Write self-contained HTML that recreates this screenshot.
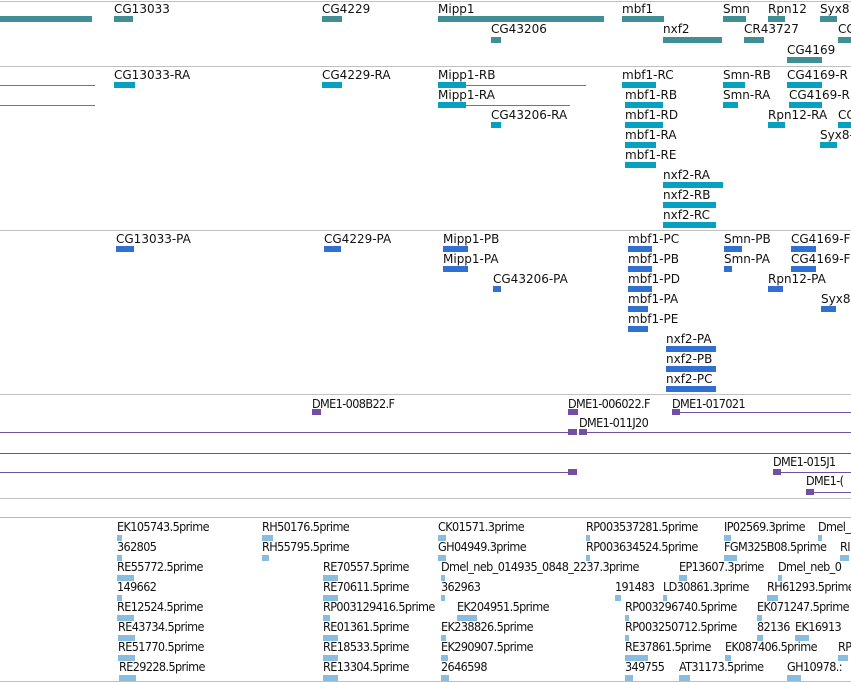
<!DOCTYPE html>
<html><head><meta charset="utf-8"><style>
body{margin:0;width:851px;height:682px;background:#fff;position:relative;overflow:hidden;font-family:"DejaVu Sans","Liberation Sans",sans-serif;}
.t{position:absolute;font-size:12px;line-height:13px;color:#111;white-space:nowrap}
.c{position:absolute;font-size:12.5px;line-height:13px;color:#111;white-space:nowrap;font-stretch:condensed;letter-spacing:-0.6px}
.h{position:absolute;left:0;width:851px;height:1px;background:#c0c0c0}
.b{position:absolute;height:6px}
.g{background:#3f8f94}.r{background:#08a0c0}.p{background:#3070d0}.u{background:#7050a0}.e{background:#88bde0}
.l{position:absolute;height:1px}
</style></head><body>
<div class="h" style="top:1px"></div>
<div class="h" style="top:66px"></div>
<div class="h" style="top:230px"></div>
<div class="h" style="top:394px"></div>
<div class="h" style="top:498px"></div>
<div class="h" style="top:517px;background:#9cc0dc"></div>
<div class="h" style="top:681px"></div>

<!-- genes -->
<div class="b g" style="left:0;top:16px;width:92px"></div>
<div class="t" style="left:114px;top:3px">CG13033</div><div class="b g" style="left:114px;top:16px;width:19px"></div>
<div class="t" style="left:322px;top:3px">CG4229</div><div class="b g" style="left:322px;top:16px;width:20px"></div>
<div class="t" style="left:438px;top:3px">Mipp1</div><div class="b g" style="left:438px;top:16px;width:166px"></div>
<div class="t" style="left:622px;top:3px">mbf1</div><div class="b g" style="left:622px;top:16px;width:42px"></div>
<div class="t" style="left:723px;top:3px">Smn</div><div class="b g" style="left:723px;top:16px;width:23px"></div>
<div class="t" style="left:768px;top:3px">Rpn12</div><div class="b g" style="left:768px;top:16px;width:17px"></div>
<div class="t" style="left:820px;top:3px">Syx8</div><div class="b g" style="left:820px;top:16px;width:17px"></div>
<div class="t" style="left:491px;top:23px">CG43206</div><div class="b g" style="left:491px;top:37px;width:10px"></div>
<div class="t" style="left:663px;top:23px">nxf2</div><div class="b g" style="left:663px;top:37px;width:59px"></div>
<div class="t" style="left:744px;top:23px">CR43727</div><div class="b g" style="left:744px;top:37px;width:20px"></div>
<div class="t" style="left:838px;top:23px">CG</div><div class="b g" style="left:838px;top:37px;width:13px"></div>
<div class="t" style="left:787px;top:44px">CG4169</div><div class="b g" style="left:787px;top:57px;width:35px"></div>

<!-- transcripts -->
<div class="l r" style="left:0;top:85px;width:95px"></div><div class="l r" style="left:0;top:105px;width:95px"></div>
<div class="t" style="left:114px;top:69px">CG13033-RA</div><div class="b r" style="left:114px;top:82px;width:21px"></div>
<div class="t" style="left:322px;top:69px">CG4229-RA</div><div class="b r" style="left:322px;top:82px;width:20px"></div>
<div class="t" style="left:438px;top:69px">Mipp1-RB</div><div class="b r" style="left:438px;top:82px;width:28px"></div><div class="l r" style="left:438px;top:85px;width:148px"></div>
<div class="t" style="left:438px;top:89px">Mipp1-RA</div><div class="b r" style="left:438px;top:102px;width:28px"></div><div class="l r" style="left:438px;top:105px;width:132px"></div>
<div class="t" style="left:491px;top:109px">CG43206-RA</div><div class="b r" style="left:491px;top:122px;width:10px"></div>
<div class="t" style="left:622px;top:69px">mbf1-RC</div><div class="b r" style="left:622px;top:82px;width:34px"></div>
<div class="t" style="left:625px;top:89px">mbf1-RB</div><div class="b r" style="left:625px;top:102px;width:38px"></div>
<div class="t" style="left:625px;top:109px">mbf1-RD</div><div class="b r" style="left:625px;top:122px;width:38px"></div>
<div class="t" style="left:625px;top:129px">mbf1-RA</div><div class="b r" style="left:625px;top:142px;width:31px"></div>
<div class="t" style="left:625px;top:149px">mbf1-RE</div><div class="b r" style="left:625px;top:162px;width:31px"></div>
<div class="t" style="left:663px;top:169px">nxf2-RA</div><div class="b r" style="left:663px;top:182px;width:60px"></div>
<div class="t" style="left:663px;top:189px">nxf2-RB</div><div class="b r" style="left:663px;top:202px;width:53px"></div>
<div class="t" style="left:663px;top:209px">nxf2-RC</div><div class="b r" style="left:663px;top:222px;width:53px"></div>
<div class="t" style="left:723px;top:69px">Smn-RB</div><div class="b r" style="left:723px;top:82px;width:22px"></div>
<div class="t" style="left:723px;top:89px">Smn-RA</div><div class="b r" style="left:723px;top:102px;width:15px"></div>
<div class="t" style="left:787px;top:69px">CG4169-R</div><div class="b r" style="left:787px;top:82px;width:35px"></div>
<div class="t" style="left:789px;top:89px">CG4169-R</div><div class="b r" style="left:789px;top:102px;width:33px"></div>
<div class="t" style="left:768px;top:109px">Rpn12-RA</div><div class="b r" style="left:768px;top:122px;width:17px"></div>
<div class="t" style="left:838px;top:109px">CC</div><div class="b r" style="left:838px;top:122px;width:13px"></div>
<div class="t" style="left:820px;top:129px">Syx8-</div><div class="b r" style="left:820px;top:142px;width:17px"></div>

<!-- proteins -->
<div class="t" style="left:116px;top:233px">CG13033-PA</div><div class="b p" style="left:116px;top:246px;width:18px"></div>
<div class="t" style="left:324px;top:233px">CG4229-PA</div><div class="b p" style="left:324px;top:246px;width:17px"></div>
<div class="t" style="left:443px;top:233px">Mipp1-PB</div><div class="b p" style="left:443px;top:246px;width:25px"></div>
<div class="t" style="left:443px;top:253px">Mipp1-PA</div><div class="b p" style="left:443px;top:266px;width:25px"></div>
<div class="t" style="left:493px;top:273px">CG43206-PA</div><div class="b p" style="left:493px;top:286px;width:8px"></div>
<div class="t" style="left:628px;top:233px">mbf1-PC</div><div class="b p" style="left:628px;top:246px;width:24px"></div>
<div class="t" style="left:628px;top:253px">mbf1-PB</div><div class="b p" style="left:628px;top:266px;width:24px"></div>
<div class="t" style="left:628px;top:273px">mbf1-PD</div><div class="b p" style="left:628px;top:286px;width:24px"></div>
<div class="t" style="left:628px;top:293px">mbf1-PA</div><div class="b p" style="left:628px;top:306px;width:20px"></div>
<div class="t" style="left:628px;top:313px">mbf1-PE</div><div class="b p" style="left:628px;top:326px;width:20px"></div>
<div class="t" style="left:666px;top:333px">nxf2-PA</div><div class="b p" style="left:666px;top:346px;width:50px"></div>
<div class="t" style="left:666px;top:353px">nxf2-PB</div><div class="b p" style="left:666px;top:366px;width:50px"></div>
<div class="t" style="left:666px;top:373px">nxf2-PC</div><div class="b p" style="left:666px;top:386px;width:50px"></div>
<div class="t" style="left:724px;top:233px">Smn-PB</div><div class="b p" style="left:724px;top:246px;width:18px"></div>
<div class="t" style="left:724px;top:253px">Smn-PA</div><div class="b p" style="left:724px;top:266px;width:8px"></div>
<div class="t" style="left:791px;top:233px">CG4169-F</div><div class="b p" style="left:791px;top:246px;width:25px"></div>
<div class="t" style="left:791px;top:253px">CG4169-F</div><div class="b p" style="left:791px;top:266px;width:25px"></div>
<div class="t" style="left:768px;top:273px">Rpn12-PA</div><div class="b p" style="left:768px;top:286px;width:15px"></div>
<div class="t" style="left:821px;top:293px">Syx8-</div><div class="b p" style="left:821px;top:306px;width:15px"></div>

<!-- clones -->
<div class="c" style="left:312px;top:397px">DME1-008B22.F</div><div class="b u" style="left:312px;top:409px;width:9px"></div>
<div class="c" style="left:568px;top:397px">DME1-006022.F</div><div class="b u" style="left:568px;top:409px;width:10px"></div>
<div class="c" style="left:672px;top:397px">DME1-017021</div><div class="b u" style="left:672px;top:409px;width:8px"></div><div class="l u" style="left:672px;top:412px;width:179px"></div>
<div class="c" style="left:579px;top:416px">DME1-011J20</div>
<div class="l u" style="left:0;top:432px;width:575px"></div><div class="b u" style="left:568px;top:429px;width:9px"></div><div class="b u" style="left:579px;top:429px;width:8px"></div><div class="l u" style="left:580px;top:432px;width:271px"></div>
<div class="l u" style="left:0;top:453px;width:851px"></div>
<div class="l u" style="left:0;top:472px;width:575px"></div><div class="b u" style="left:568px;top:469px;width:9px"></div>
<div class="c" style="left:773px;top:455px">DME1-015J1</div><div class="b u" style="left:773px;top:469px;width:8px"></div><div class="l u" style="left:773px;top:472px;width:78px"></div>
<div class="c" style="left:806px;top:474px">DME1-(</div><div class="b u" style="left:806px;top:489px;width:8px"></div><div class="l u" style="left:806px;top:492px;width:45px"></div>

<!-- ESTs -->
<div class="c" style="left:117px;top:520px">EK105743.5prime</div><div class="b e" style="left:117px;top:535px;width:5px"></div>
<div class="c" style="left:117px;top:540px">362805</div><div class="b e" style="left:117px;top:555px;width:5px"></div>
<div class="c" style="left:117px;top:560px">RE55772.5prime</div><div class="b e" style="left:117px;top:575px;width:17px"></div>
<div class="c" style="left:117px;top:580px">149662</div><div class="b e" style="left:117px;top:595px;width:5px"></div>
<div class="c" style="left:117px;top:600px">RE12524.5prime</div><div class="b e" style="left:117px;top:615px;width:17px"></div>
<div class="c" style="left:118px;top:620px">RE43734.5prime</div><div class="b e" style="left:118px;top:635px;width:17px"></div>
<div class="c" style="left:118px;top:640px">RE51770.5prime</div><div class="b e" style="left:118px;top:655px;width:17px"></div>
<div class="c" style="left:119px;top:660px">RE29228.5prime</div><div class="b e" style="left:119px;top:675px;width:17px"></div>
<div class="c" style="left:262px;top:520px">RH50176.5prime</div><div class="b e" style="left:262px;top:535px;width:11px"></div>
<div class="c" style="left:262px;top:540px">RH55795.5prime</div><div class="b e" style="left:262px;top:555px;width:7px"></div>
<div class="c" style="left:323px;top:560px">RE70557.5prime</div><div class="b e" style="left:323px;top:575px;width:15px"></div>
<div class="c" style="left:323px;top:580px">RE70611.5prime</div><div class="b e" style="left:323px;top:595px;width:15px"></div>
<div class="c" style="left:323px;top:600px">RP003129416.5prime</div><div class="b e" style="left:323px;top:615px;width:7px"></div>
<div class="c" style="left:323px;top:620px">RE01361.5prime</div><div class="b e" style="left:323px;top:635px;width:15px"></div>
<div class="c" style="left:323px;top:640px">RE18533.5prime</div><div class="b e" style="left:323px;top:655px;width:15px"></div>
<div class="c" style="left:323px;top:660px">RE13304.5prime</div><div class="b e" style="left:323px;top:675px;width:15px"></div>
<div class="c" style="left:438px;top:520px">CK01571.3prime</div><div class="b e" style="left:438px;top:535px;width:8px"></div>
<div class="c" style="left:438px;top:540px">GH04949.3prime</div><div class="b e" style="left:438px;top:555px;width:8px"></div>
<div class="c" style="left:441px;top:560px">Dmel_neb_014935_0848_2237.3prime</div><div class="b e" style="left:441px;top:575px;width:4px"></div>
<div class="c" style="left:441px;top:580px">362963</div><div class="b e" style="left:441px;top:595px;width:4px"></div>
<div class="c" style="left:457px;top:600px">EK204951.5prime</div><div class="b e" style="left:457px;top:615px;width:20px"></div>
<div class="c" style="left:441px;top:620px">EK238826.5prime</div><div class="b e" style="left:441px;top:635px;width:5px"></div>
<div class="c" style="left:441px;top:640px">EK290907.5prime</div><div class="b e" style="left:441px;top:655px;width:7px"></div>
<div class="c" style="left:441px;top:660px">2646598</div><div class="b e" style="left:441px;top:675px;width:8px"></div>
<div class="c" style="left:586px;top:520px">RP003537281.5prime</div><div class="b e" style="left:586px;top:535px;width:4px"></div>
<div class="c" style="left:586px;top:540px">RP003634524.5prime</div><div class="b e" style="left:586px;top:555px;width:4px"></div>
<div class="c" style="left:679px;top:560px">EP13607.3prime</div><div class="b e" style="left:679px;top:575px;width:8px"></div>
<div class="c" style="left:615px;top:580px">191483</div><div class="b e" style="left:615px;top:595px;width:6px"></div>
<div class="c" style="left:663px;top:580px">LD30861.3prime</div><div class="b e" style="left:663px;top:595px;width:4px"></div>
<div class="c" style="left:625px;top:600px">RP003296740.5prime</div><div class="b e" style="left:625px;top:615px;width:4px"></div>
<div class="c" style="left:625px;top:620px">RP003250712.5prime</div><div class="b e" style="left:625px;top:635px;width:4px"></div>
<div class="c" style="left:625px;top:640px">RE37861.5prime</div><div class="b e" style="left:625px;top:655px;width:23px"></div>
<div class="c" style="left:625px;top:660px">349755</div><div class="b e" style="left:625px;top:675px;width:8px"></div>
<div class="c" style="left:679px;top:660px">AT31173.5prime</div><div class="b e" style="left:679px;top:675px;width:11px"></div>
<div class="c" style="left:724px;top:520px">IP02569.3prime</div><div class="b e" style="left:724px;top:535px;width:7px"></div>
<div class="c" style="left:724px;top:540px">FGM325B08.5prime</div><div class="b e" style="left:724px;top:555px;width:13px"></div>
<div class="c" style="left:778px;top:560px">Dmel_neb_0</div><div class="b e" style="left:778px;top:575px;width:4px"></div>
<div class="c" style="left:767px;top:580px">RH61293.5prime</div><div class="b e" style="left:767px;top:595px;width:11px"></div>
<div class="c" style="left:757px;top:600px">EK071247.5prime</div><div class="b e" style="left:757px;top:615px;width:5px"></div>
<div class="c" style="left:757px;top:620px">82136</div><div class="b e" style="left:757px;top:635px;width:6px"></div>
<div class="c" style="left:795px;top:620px">EK16913</div><div class="b e" style="left:795px;top:635px;width:14px"></div>
<div class="c" style="left:725px;top:640px">EK087406.5prime</div><div class="b e" style="left:725px;top:655px;width:6px"></div>
<div class="c" style="left:838px;top:640px">RP</div><div class="b e" style="left:838px;top:655px;width:10px"></div>
<div class="c" style="left:787px;top:660px">GH10978.:</div><div class="b e" style="left:787px;top:675px;width:14px"></div>
<div class="c" style="left:818px;top:520px">Dmel_</div><div class="b e" style="left:818px;top:535px;width:4px"></div>
<div class="c" style="left:840px;top:540px">RI</div><div class="b e" style="left:840px;top:555px;width:9px"></div>
</body></html>
